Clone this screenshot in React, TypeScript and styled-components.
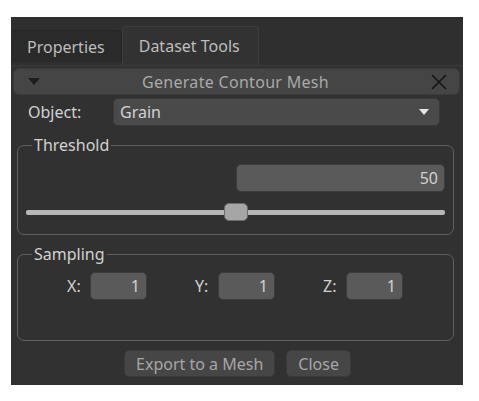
import styled, { createGlobalStyle } from "styled-components";

const GlobalStyle = createGlobalStyle`
  body {
    margin: 0;
    background: #ffffff;
    font-family: "Noto Sans", "Open Sans", sans-serif;
  }
`;

const Window = styled.div`
  margin: 17px 0 0 11px;
  width: 452px;
  height: 368px;
  background: #313131;
  display: flex;
  flex-direction: column;
  color: #cfcfcf;
  font-size: 16px;
`;

const TabBar = styled.div`
  height: 48px;
  display: flex;
  align-items: flex-end;
  background: #2f2f2f;
`;

const Tab = styled.div<{ $active?: boolean }>`
  box-sizing: border-box;
  height: ${(p) => (p.$active ? "39px" : "32px")};
  margin-bottom: ${(p) => (p.$active ? "0" : "3px")};
  padding: 0 ${(p) => (p.$active ? "18px" : "16px")} 0 16px;
  display: flex;
  align-items: center;
  background: ${(p) => (p.$active ? "#323232" : "#2a2a2a")};
  border: 1px solid ${(p) => (p.$active ? "#3d3d3d" : "#262626")};
  border-bottom: none;
  border-left: ${(p) => (p.$active ? "1px solid #3d3d3d" : "none")};
  border-radius: 4px 4px 0 0;
  color: #bdbdbd;
`;

const Pane = styled.div`
  flex: 1;
  border-top: 1px solid #3b3b3b;
  padding: 2px 3px 0 2px;
  display: flex;
  flex-direction: column;
`;

const Header = styled.div`
  height: 27px;
  box-sizing: border-box;
  background: #454545;
  border: 1px solid #3a3a3a;
  border-radius: 6px;
  display: flex;
  align-items: center;
  padding: 0 12px 0 14px;
  color: #a9a9a9;
`;

const HeaderTitle = styled.div`
  flex: 1;
  text-align: center;
  letter-spacing: 0.3px;
`;

const FormRow = styled.div`
  display: flex;
  align-items: center;
  margin: 3px 20px 0 15px;
`;

const Label = styled.span`
  width: 85px;
  color: #d2d2d2;
`;

const Combo = styled.div`
  flex: 1;
  height: 28px;
  box-sizing: border-box;
  background: #4a4a4a;
  border: 1px solid #3a3a3a;
  border-radius: 5px;
  display: flex;
  align-items: center;
  padding: 0 10px 0 6px;
  color: #d2d2d2;
`;

const ComboText = styled.span`
  flex: 1;
`;

const Group = styled.fieldset<{ $h: number }>`
  margin: 0 6px 0 4px;
  height: ${(p) => p.$h}px;
  box-sizing: border-box;
  border: 1px solid #5f5f5f;
  border-radius: 7px;
  padding: 0 8px;
  display: flex;
  flex-direction: column;
  min-width: 0;
`;

const Legend = styled.legend`
  padding: 0 2px;
  margin-left: 6px;
  color: #d2d2d2;
  line-height: 18px;
`;

const SpinRow = styled.div`
  display: flex;
  justify-content: flex-end;
  margin-top: 10px;
`;

const Spin = styled.div<{ $w: number }>`
  width: ${(p) => p.$w}px;
  height: 28px;
  box-sizing: border-box;
  background: #5a5a5a;
  border: 1px solid #3c3c3c;
  border-radius: 5px;
  display: flex;
  align-items: center;
  justify-content: flex-end;
  padding-right: 6px;
  color: #d2d2d2;
`;

const SliderTrack = styled.div`
  position: relative;
  height: 5px;
  margin-top: 18px;
  background: #b7b7b7;
  border-radius: 2px;
`;

const SliderHandle = styled.div`
  position: absolute;
  left: 198px;
  top: -7px;
  width: 24px;
  height: 18px;
  box-sizing: border-box;
  background: #a6a6a6;
  border: 1px solid #6d6d6d;
  border-radius: 5px;
`;

const Sampling = styled.div`
  display: flex;
  align-items: center;
  margin-top: 9px;
  padding-left: 41px;
  gap: 48px;
`;

const AxisCell = styled.div`
  display: flex;
  align-items: center;
`;

const AxisLabel = styled.span`
  width: 23px;
  color: #d2d2d2;
`;

const ButtonRow = styled.div`
  display: flex;
  justify-content: center;
  gap: 11px;
  margin-top: 9px;
  padding-left: 2px;
`;

const Button = styled.div`
  height: 27px;
  box-sizing: border-box;
  padding: 0 11px;
  background: #464646;
  border: 1px solid #3a3a3a;
  border-radius: 5px;
  display: flex;
  align-items: center;
  color: #a6a6a6;
`;

const Spacer = styled.div<{ $h: number }>`
  height: ${(p) => p.$h}px;
`;

export default function App() {
  return (
    <>
      <GlobalStyle />
      <Window>
        <TabBar>
          <Tab>Properties</Tab>
          <Tab $active>Dataset Tools</Tab>
        </TabBar>
        <Pane>
          <Header>
            <svg width="12" height="7" viewBox="0 0 12 7">
              <path d="M0 0 L12 0 L6 7 Z" fill="#1e1e1e" />
            </svg>
            <HeaderTitle>Generate Contour Mesh</HeaderTitle>
            <svg width="16" height="16" viewBox="0 0 16 16">
              <path d="M1 1 L15 15 M15 1 L1 15" stroke="#151515" strokeWidth="1.6" />
            </svg>
          </Header>
          <FormRow>
            <Label>Object:</Label>
            <Combo>
              <ComboText>Grain</ComboText>
              <svg width="10" height="6" viewBox="0 0 10 6">
                <path d="M0 0 L10 0 L5 6 Z" fill="#e6e6e6" />
              </svg>
            </Combo>
          </FormRow>
          <Spacer $h={10} />
          <Group $h={99}>
            <Legend>Threshold</Legend>
            <SpinRow>
              <Spin $w={209}>50</Spin>
            </SpinRow>
            <SliderTrack>
              <SliderHandle />
            </SliderTrack>
          </Group>
          <Spacer $h={10} />
          <Group $h={96}>
            <Legend>Sampling</Legend>
            <Sampling>
              <AxisCell>
                <AxisLabel>X:</AxisLabel>
                <Spin $w={57}>1</Spin>
              </AxisCell>
              <AxisCell>
                <AxisLabel>Y:</AxisLabel>
                <Spin $w={57}>1</Spin>
              </AxisCell>
              <AxisCell>
                <AxisLabel>Z:</AxisLabel>
                <Spin $w={57}>1</Spin>
              </AxisCell>
            </Sampling>
          </Group>
          <ButtonRow>
            <Button>Export to a Mesh</Button>
            <Button>Close</Button>
          </ButtonRow>
        </Pane>
      </Window>
    </>
  );
}
